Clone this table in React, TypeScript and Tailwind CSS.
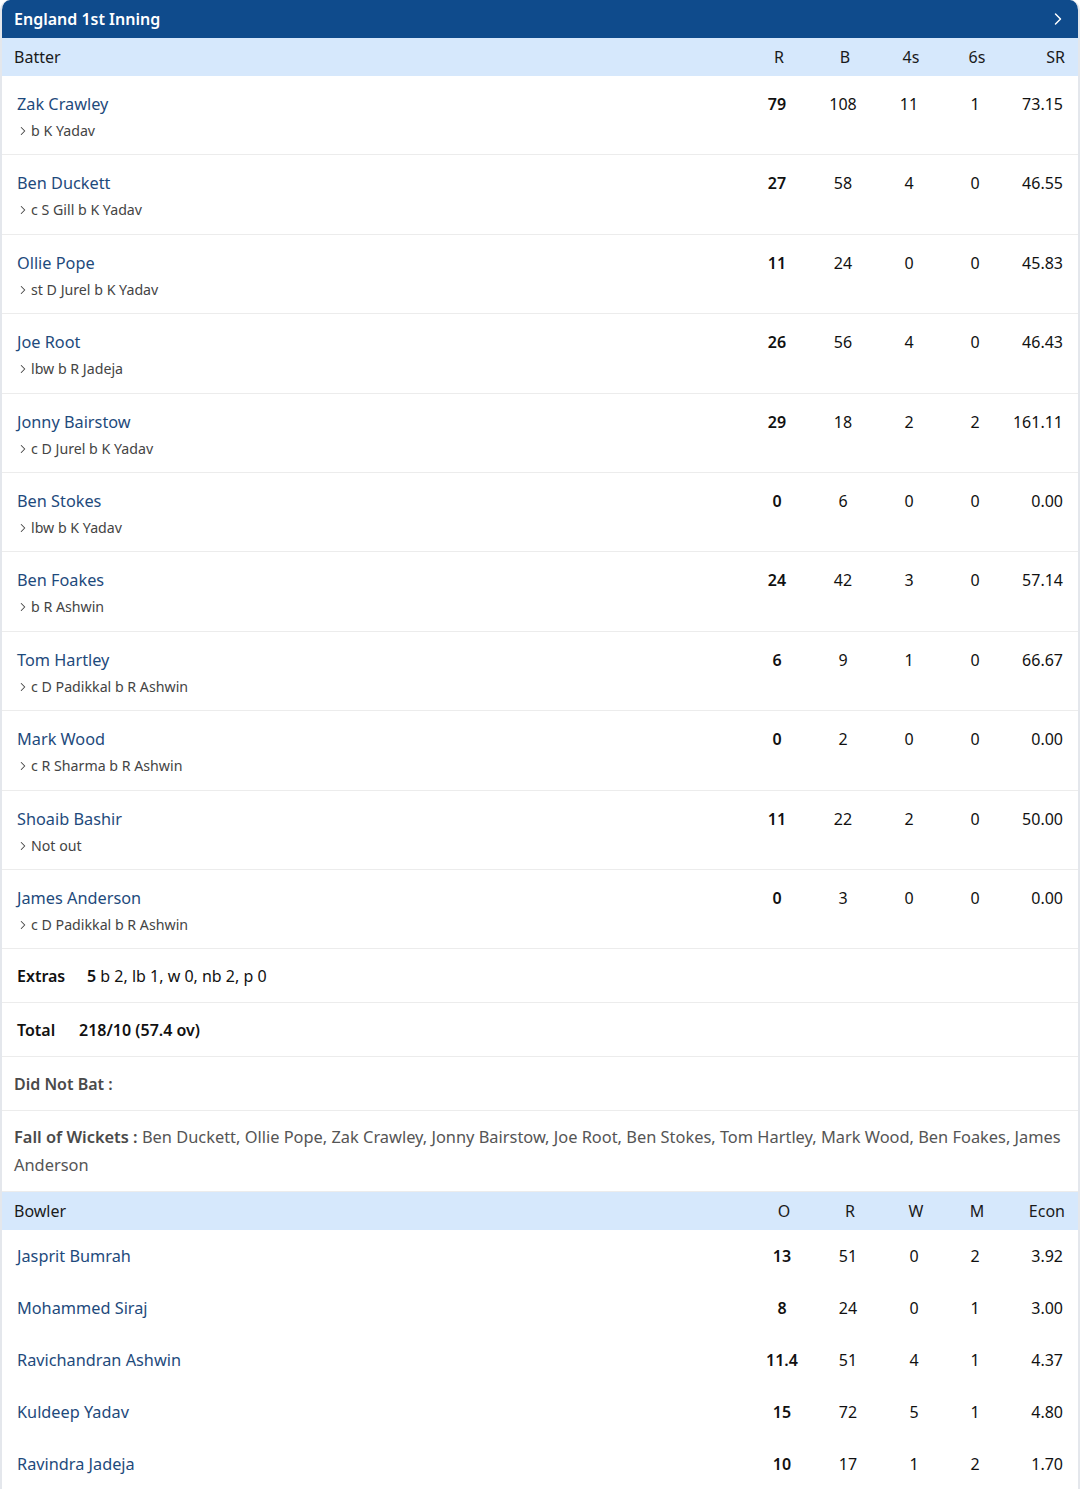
import { ChevronRight } from "lucide-react";

type Batter = { name: string; out: string; r: string; b: string; f: string; s: string; sr: string };
type Bowler = { name: string; o: string; r: string; w: string; m: string; econ: string };

const batters: Batter[] = [
  { name: "Zak Crawley", out: "b K Yadav", r: "79", b: "108", f: "11", s: "1", sr: "73.15" },
  { name: "Ben Duckett", out: "c S Gill b K Yadav", r: "27", b: "58", f: "4", s: "0", sr: "46.55" },
  { name: "Ollie Pope", out: "st D Jurel b K Yadav", r: "11", b: "24", f: "0", s: "0", sr: "45.83" },
  { name: "Joe Root", out: "lbw b R Jadeja", r: "26", b: "56", f: "4", s: "0", sr: "46.43" },
  { name: "Jonny Bairstow", out: "c D Jurel b K Yadav", r: "29", b: "18", f: "2", s: "2", sr: "161.11" },
  { name: "Ben Stokes", out: "lbw b K Yadav", r: "0", b: "6", f: "0", s: "0", sr: "0.00" },
  { name: "Ben Foakes", out: "b R Ashwin", r: "24", b: "42", f: "3", s: "0", sr: "57.14" },
  { name: "Tom Hartley", out: "c D Padikkal b R Ashwin", r: "6", b: "9", f: "1", s: "0", sr: "66.67" },
  { name: "Mark Wood", out: "c R Sharma b R Ashwin", r: "0", b: "2", f: "0", s: "0", sr: "0.00" },
  { name: "Shoaib Bashir", out: "Not out", r: "11", b: "22", f: "2", s: "0", sr: "50.00" },
  { name: "James Anderson", out: "c D Padikkal b R Ashwin", r: "0", b: "3", f: "0", s: "0", sr: "0.00" },
];

const bowlers: Bowler[] = [
  { name: "Jasprit Bumrah", o: "13", r: "51", w: "0", m: "2", econ: "3.92" },
  { name: "Mohammed Siraj", o: "8", r: "24", w: "0", m: "1", econ: "3.00" },
  { name: "Ravichandran Ashwin", o: "11.4", r: "51", w: "4", m: "1", econ: "4.37" },
  { name: "Kuldeep Yadav", o: "15", r: "72", w: "5", m: "1", econ: "4.80" },
  { name: "Ravindra Jadeja", o: "10", r: "17", w: "1", m: "2", econ: "1.70" },
];

export default function App() {
  return (
    <div className="w-[1080px] bg-white font-['Noto_Sans',sans-serif] text-[#222]">
      <div className="rounded-t-[10px] border-x-2 border-[#e4e7ec] overflow-hidden">
        {/* innings header */}
        <div className="h-[38px] bg-[#0f4b8c] flex items-center justify-between pl-3 pr-[10px] text-white">
          <span className="text-[16px] font-semibold">England 1st Inning</span>
          <ChevronRight className="w-5 h-5" strokeWidth={1.75} />
        </div>

        {/* batter table */}
        <div className="h-[38px] bg-[#d6e8fc] flex items-center pl-3 pr-[13px] text-[16px] text-[#1a1a1a]">
          <span className="flex-1">Batter</span>
          <span className="w-[66px] text-center">R</span>
          <span className="w-[66px] text-center">B</span>
          <span className="w-[66px] text-center">4s</span>
          <span className="w-[66px] text-center">6s</span>
          <span className="w-[55px] text-right">SR</span>
        </div>
        {batters.map((p) => (
          <div key={p.name} className="h-[79.4px] border-b border-[#ececec] flex items-start pt-[15px] pl-[15px] pr-[15px]">
            <div className="flex-1">
              <div className="text-[16.3px] leading-[26px] text-[#1e4a7c]">{p.name}</div>
              <div className="flex items-center text-[14.2px] leading-[28px] text-[#444]">
                <ChevronRight className="w-3.5 h-3.5 -ml-[1px] mr-[1px]" strokeWidth={1.75} />
                <span>{p.out}</span>
              </div>
            </div>
            <span className="w-[66px] text-center text-[16px] leading-[26px] font-semibold text-[#111]">{p.r}</span>
            <span className="w-[66px] text-center text-[16px] leading-[26px] text-[#111]">{p.b}</span>
            <span className="w-[66px] text-center text-[16px] leading-[26px] text-[#111]">{p.f}</span>
            <span className="w-[66px] text-center text-[16px] leading-[26px] text-[#111]">{p.s}</span>
            <span className="w-[55px] text-right text-[16px] leading-[26px] text-[#111]">{p.sr}</span>
          </div>
        ))}

        {/* extras / total */}
        <div className="h-[54px] border-b border-[#ececec] flex items-center pl-[15px] text-[16px] text-[#111]">
          <span className="font-semibold w-[70px]">Extras</span>
          <span><span className="font-semibold">5</span> b 2, lb 1, w 0, nb 2, p 0</span>
        </div>
        <div className="h-[54px] border-b border-[#ececec] flex items-center pl-[15px] text-[16px] text-[#111] font-semibold">
          <span className="w-[62px]">Total</span>
          <span>218/10 (57.4 ov)</span>
        </div>
        <div className="h-[54px] border-b border-[#ececec] flex items-center pl-3 text-[16px] text-[#4a4a4a] font-semibold">
          Did Not Bat :
        </div>
        <p className="border-b border-[#ececec] pl-3 pr-4 pt-[12px] pb-[12px] text-[16.4px] leading-[28px] text-[#555]">
          <b className="font-semibold text-[#4a4a4a]">Fall of Wickets :</b> Ben Duckett, Ollie Pope, Zak Crawley, Jonny Bairstow, Joe Root, Ben Stokes, Tom Hartley, Mark Wood, Ben Foakes, James Anderson
        </p>

        {/* bowler table */}
        <div className="h-[38px] bg-[#d6e8fc] flex items-center pl-3 pr-[13px] text-[16px] text-[#1a1a1a]">
          <span className="flex-1">Bowler</span>
          <span className="w-[66px] text-center">O</span>
          <span className="w-[66px] text-center">R</span>
          <span className="w-[66px] text-center">W</span>
          <span className="w-[56px] text-center">M</span>
          <span className="w-[60px] text-right">Econ</span>
        </div>
        {bowlers.map((b) => (
          <div key={b.name} className="h-[52px] flex items-center pl-[15px] pr-[15px] text-[16px]">
            <span className="flex-1 text-[16.3px] text-[#1e4a7c]">{b.name}</span>
            <span className="w-[66px] text-center font-semibold text-[#111]">{b.o}</span>
            <span className="w-[66px] text-center text-[#111]">{b.r}</span>
            <span className="w-[66px] text-center text-[#111]">{b.w}</span>
            <span className="w-[56px] text-center text-[#111]">{b.m}</span>
            <span className="w-[60px] text-right text-[#111]">{b.econ}</span>
          </div>
        ))}
      </div>
    </div>
  );
}
